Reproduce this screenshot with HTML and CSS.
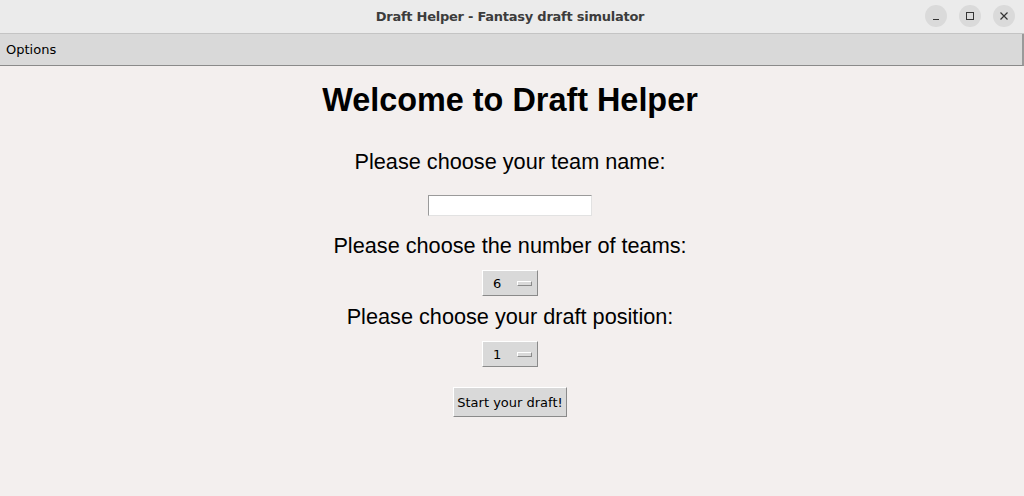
FILE: index.html
```html
<!DOCTYPE html>
<html>
<head>
<meta charset="utf-8">
<link rel="stylesheet" href="styles.css">
</head>
<body>
<div class="window">
  <div class="titlebar">
    <div class="title">Draft Helper - Fantasy draft simulator</div>
    <div class="controls">
      <span class="ctl"><svg width="10" height="10" viewBox="0 0 10 10"><path d="M2 8.5H8" stroke="#333" stroke-width="1"/></svg></span>
      <span class="ctl"><svg width="10" height="10" viewBox="0 0 10 10"><rect x="1.5" y="1.5" width="7" height="7" fill="none" stroke="#333" stroke-width="1"/></svg></span>
      <span class="ctl"><svg width="10" height="10" viewBox="0 0 10 10"><path d="M1.5 1.5L8.5 8.5M8.5 1.5L1.5 8.5" stroke="#333" stroke-width="1.2"/></svg></span>
    </div>
  </div>
  <div class="menubar"><span class="menu-item">Options</span></div>
  <main class="content">
    <h1 class="heading">Welcome to Draft Helper</h1>
    <div class="label label-first">Please choose your team name:</div>
    <div class="entry"></div>
    <div class="label label-teams">Please choose the number of teams:</div>
    <div class="optmenu"><span class="optval">6</span><span class="indicator"></span></div>
    <div class="label label-pos">Please choose your draft position:</div>
    <div class="optmenu"><span class="optval">1</span><span class="indicator"></span></div>
    <div class="button">Start your draft!</div>
  </main>
</div>
</body>
</html>
```
FILE: styles.css
```css
html, body {
  margin: 0;
  padding: 0;
  width: 1024px;
  height: 496px;
  overflow: hidden;
  background: #f3efee;
}
.window {
  width: 1024px;
  height: 496px;
  display: flex;
  flex-direction: column;
  background: #f3efee;
}
.titlebar {
  height: 33px;
  background: #ebebeb;
  border-bottom: 1px solid #c4c4c4;
  display: flex;
  align-items: center;
  justify-content: center;
  padding-right: 4px;
  position: relative;
  flex-shrink: 0;
}
.title {
  font-family: "DejaVu Sans", sans-serif;
  font-weight: bold;
  font-size: 13px;
  color: #3c3c3c;
  letter-spacing: -0.25px;
}
.controls {
  position: absolute;
  right: 9px;
  top: 5px;
  display: flex;
  gap: 12px;
}
.ctl {
  width: 22px;
  height: 22px;
  border-radius: 50%;
  background: #dadada;
  display: flex;
  align-items: center;
  justify-content: center;
}
.menubar {
  height: 31px;
  background: #d9d9d9;
  border-bottom: 1px solid #8a8a8a;
  border-right: 2px solid #9a9a9a;
  display: flex;
  align-items: center;
  flex-shrink: 0;
}
.menu-item {
  font-family: "DejaVu Sans", sans-serif;
  font-size: 13px;
  color: #000;
  margin-left: 6px;
}
.content {
  display: flex;
  flex-direction: column;
  align-items: center;
  padding-right: 4px;
  font-family: "Liberation Sans", Arial, sans-serif;
  color: #000;
}
.heading {
  font-size: 32.4px;
  font-weight: bold;
  margin: 16px 0 0 0;
  line-height: 36px;
}
.label {
  font-size: 21.7px;
  line-height: 26px;
}
.label-first { margin-top: 31px; }
.entry {
  margin-top: 20px;
  width: 162px;
  height: 19px;
  background: #fff;
  border-top: 1px solid #9a9a9a;
  border-left: 1px solid #9a9a9a;
  border-right: 1px solid #e2e2e2;
  border-bottom: 1px solid #e2e2e2;
}
.label-teams { margin-top: 17px; }
.optmenu {
  margin-top: 11px;
  width: 54px;
  height: 24px;
  background: #d9d9d9;
  border-top: 1px solid #fff;
  border-left: 1px solid #fff;
  border-right: 1px solid #8a8a8a;
  border-bottom: 1px solid #8a8a8a;
  display: flex;
  align-items: center;
  font-family: "DejaVu Sans", sans-serif;
  font-size: 13px;
}
.optval {
  margin-left: 10px;
  width: 14px;
}
.indicator {
  margin-left: 10px;
  width: 13px;
  height: 3px;
  background: #d9d9d9;
  border-top: 1px solid #fff;
  border-left: 1px solid #fff;
  border-right: 1px solid #8a8a8a;
  border-bottom: 1px solid #8a8a8a;
}
.label-pos { margin-top: 8px; }
.button {
  margin-top: 20px;
  width: 112px;
  height: 28px;
  background: #d9d9d9;
  border-top: 1px solid #fff;
  border-left: 1px solid #fff;
  border-right: 1px solid #8a8a8a;
  border-bottom: 1px solid #8a8a8a;
  display: flex;
  align-items: center;
  justify-content: center;
  font-family: "DejaVu Sans", sans-serif;
  font-size: 13px;
}
```
